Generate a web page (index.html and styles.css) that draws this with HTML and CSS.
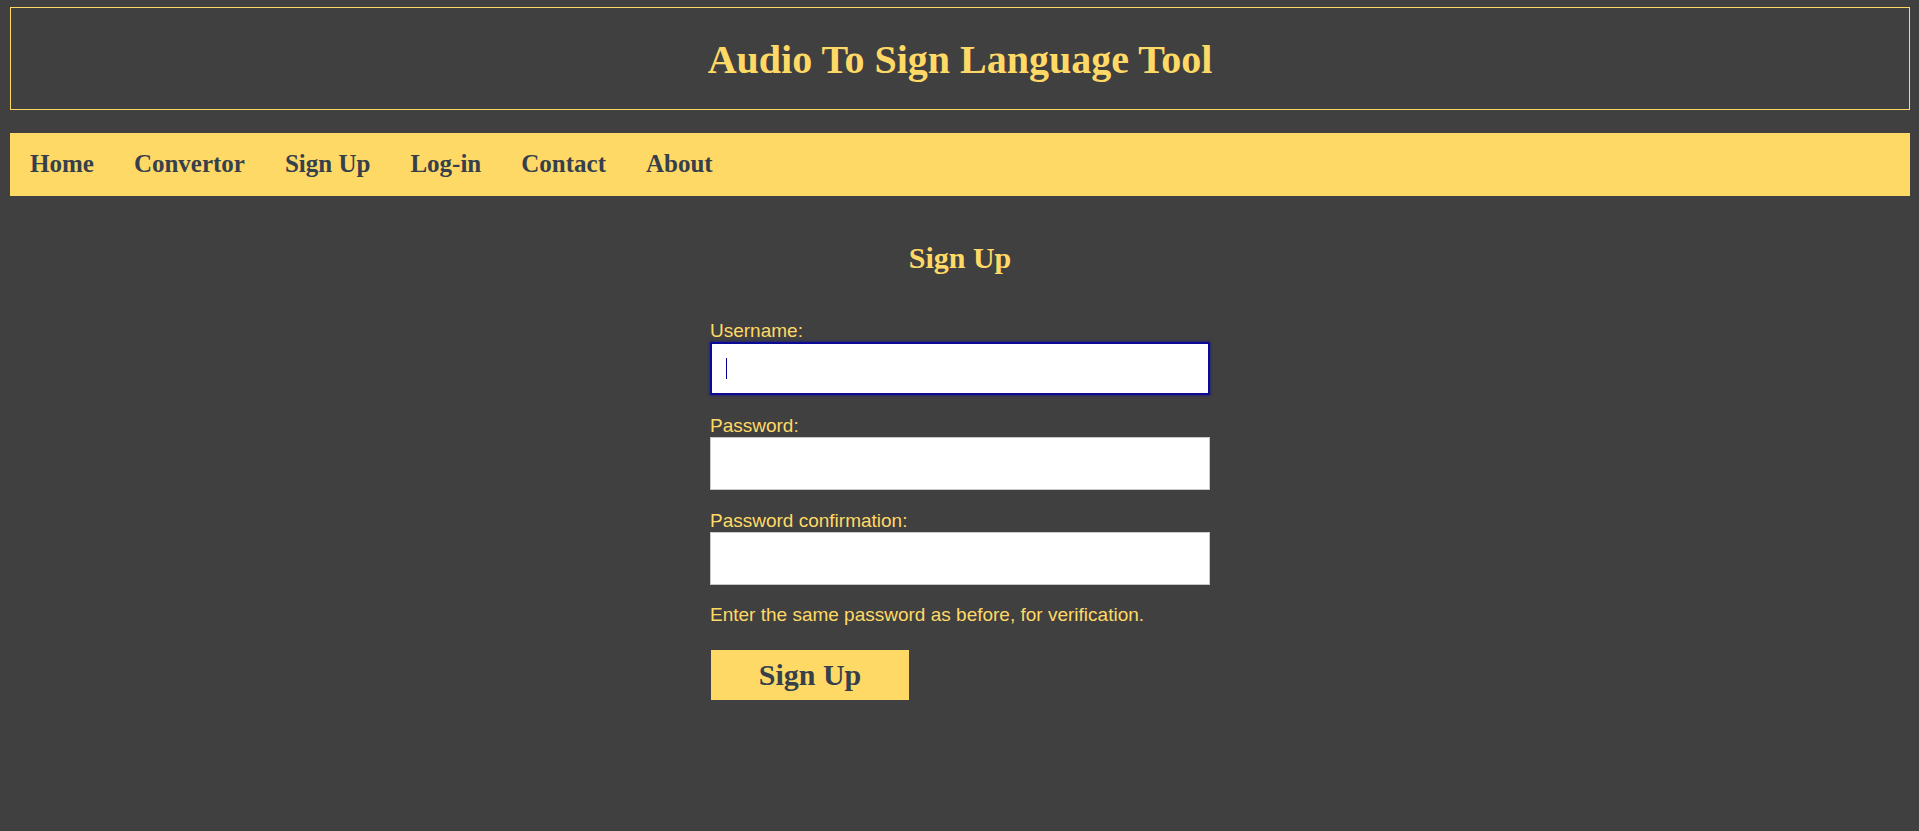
FILE: index.html
```html
<!DOCTYPE html>
<html lang="en">
<head>
<meta charset="utf-8">
<title>Audio To Sign Language Tool</title>
<link rel="stylesheet" href="styles.css">
</head>
<body>
<div class="page">
  <header class="site-header">
    <h1 class="site-title">Audio To Sign Language Tool</h1>
  </header>
  <nav class="main-nav">
    <a class="nav-link" href="#">Home</a>
    <a class="nav-link" href="#">Convertor</a>
    <a class="nav-link" href="#">Sign Up</a>
    <a class="nav-link" href="#">Log-in</a>
    <a class="nav-link" href="#">Contact</a>
    <a class="nav-link" href="#">About</a>
  </nav>
  <main class="content">
    <h2 class="page-title">Sign Up</h2>
    <form class="signup-form" onsubmit="return false;">
      <label class="field-label" for="username">Username:</label>
      <div class="input-wrap">
        <input class="field-input is-focused" type="text" id="username" autofocus>
        <span class="caret"></span>
      </div>
      <label class="field-label" for="password1">Password:</label>
      <input class="field-input" type="password" id="password1">
      <label class="field-label" for="password2">Password confirmation:</label>
      <input class="field-input" type="password" id="password2">
      <p class="help-text">Enter the same password as before, for verification.</p>
      <button class="submit-btn" type="submit">Sign Up</button>
    </form>
  </main>
</div>
</body>
</html>
```
FILE: styles.css
```css
html, body {
  margin: 0;
  padding: 0;
  background: #404040;
}

.page {
  padding: 7px 9px 0 10px;
  min-height: 824px;
}

.site-header {
  border: 1px solid #ffd966;
  padding: 29px 0 26px;
  text-align: center;
}

.site-title {
  margin: 0;
  font-family: "Liberation Serif", "Times New Roman", serif;
  font-weight: bold;
  font-size: 40px;
  line-height: 46px;
  color: #ffd966;
}

.main-nav {
  margin-top: 23px;
  background: #ffd966;
  display: flex;
  padding: 17px 0 18px;
}

.nav-link {
  padding: 0 20px;
  font-family: "Liberation Serif", "Times New Roman", serif;
  font-weight: bold;
  font-size: 25px;
  color: #363f4c;
  text-decoration: none;
}

.content {
  display: flex;
  flex-direction: column;
  align-items: center;
  padding-top: 45px;
}

.page-title {
  margin: 0;
  font-family: "Liberation Serif", "Times New Roman", serif;
  font-weight: bold;
  font-size: 30px;
  color: #ffd966;
}

.signup-form {
  width: 500px;
  margin-top: 45px;
  display: flex;
  flex-direction: column;
  align-items: flex-start;
}

.field-label {
  font-family: "Liberation Sans", Arial, sans-serif;
  font-size: 19px;
  color: #ffd966;
}

.input-wrap {
  position: relative;
  width: 500px;
}

.field-input {
  box-sizing: border-box;
  display: block;
  width: 500px;
  height: 53px;
  margin: 0 0 20px;
  padding: 0 14px;
  border: 1px solid #c8c8c8;
  background: #ffffff;
  font-family: "Liberation Sans", Arial, sans-serif;
  font-size: 19px;
  caret-color: #00008b;
}

.field-input:focus,
.field-input.is-focused {
  outline: none;
  border: 2px solid #0a0a96;
  box-shadow: 0 0 3px rgba(10, 10, 150, 0.8);
}

.caret {
  position: absolute;
  left: 16px;
  top: 16px;
  width: 1px;
  height: 21px;
  background: #00008b;
}

.help-text {
  margin: -1px 0 0;
  font-family: "Liberation Sans", Arial, sans-serif;
  font-size: 19px;
  color: #ffd966;
}

.submit-btn {
  margin-top: 24px;
  margin-left: 1px;
  width: 198px;
  height: 50px;
  border: none;
  background: #ffd966;
  font-family: "Liberation Serif", "Times New Roman", serif;
  font-weight: bold;
  font-size: 30px;
  color: #363f4c;
  padding: 0;
  cursor: pointer;
}
```
